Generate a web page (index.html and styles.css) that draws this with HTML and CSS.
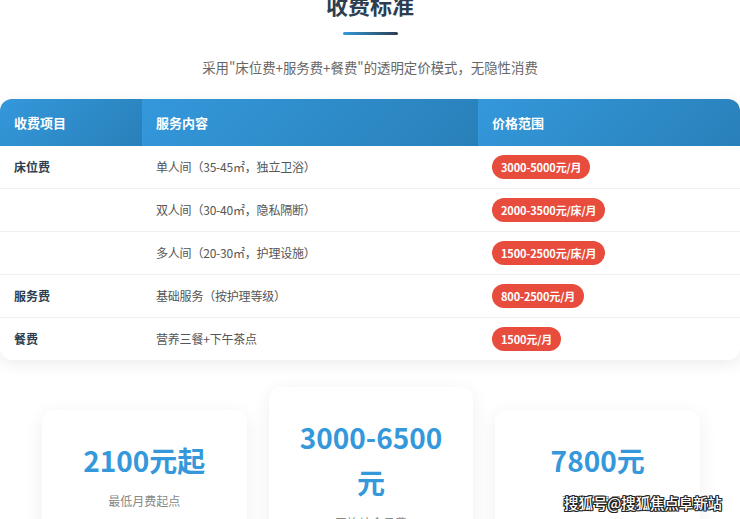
FILE: index.html
```html
<!DOCTYPE html>
<html lang="zh-CN">
<head>
<meta charset="utf-8">
<title>收费标准</title>
<link rel="stylesheet" href="styles.css">
</head>
<body>
<div class="page">
  <header class="head">
    <h2 class="title">收费标准</h2>
    <div class="bar"></div>
    <p class="subtitle">采用"床位费+服务费+餐费"的透明定价模式，无隐性消费</p>
  </header>

  <div class="table-card">
    <table class="fee-table">
      <colgroup>
        <col class="c1"><col class="c2"><col class="c3">
      </colgroup>
      <thead>
        <tr><th>收费项目</th><th>服务内容</th><th>价格范围</th></tr>
      </thead>
      <tbody>
        <tr><td class="item">床位费</td><td class="desc">单人间（35-45㎡，独立卫浴）</td><td><span class="pill">3000-5000元/月</span></td></tr>
        <tr><td class="item"></td><td class="desc">双人间（30-40㎡，隐私隔断）</td><td><span class="pill">2000-3500元/床/月</span></td></tr>
        <tr><td class="item"></td><td class="desc">多人间（20-30㎡，护理设施）</td><td><span class="pill">1500-2500元/床/月</span></td></tr>
        <tr><td class="item">服务费</td><td class="desc">基础服务（按护理等级）</td><td><span class="pill">800-2500元/月</span></td></tr>
        <tr><td class="item">餐费</td><td class="desc">营养三餐+下午茶点</td><td><span class="pill">1500元/月</span></td></tr>
      </tbody>
    </table>
  </div>

  <div class="cards">
    <div class="card"><div class="num">2100元起</div><div class="label">最低月费起点</div></div>
    <div class="card"><div class="num">3000-6500元</div><div class="label">平均综合月费</div></div>
    <div class="card"><div class="num">7800元</div><div class="label">高端护理月费</div></div>
  </div>

  <div class="watermark">搜狐号@搜狐焦点阜新站</div>
</div>
</body>
</html>
```

FILE: styles.css
```css
* { box-sizing: border-box; }
html, body { margin: 0; padding: 0; background: #fff; }
body { font-family: "Noto Sans CJK SC", "Noto Sans", sans-serif; }

.page {
  position: relative;
  width: 740px;
  height: 519px;
  overflow: hidden;
}

.head { text-align: center; margin-top: -11px; }
.title {
  margin: 0;
  font-size: 22px;
  line-height: 30px;
  font-weight: 700;
  color: #2c3e50;
}
.bar {
  width: 55px;
  height: 3px;
  margin: 13px auto 0;
  border-radius: 2px;
  background: linear-gradient(90deg, #3498db, #2c3e50);
}
.subtitle {
  margin: 21px 0 0;
  font-size: 13.4px;
  line-height: 22px;
  color: #666;
}

.table-card {
  margin-top: 21px;
  border-radius: 12px;
  overflow: hidden;
  background: #fff;
  box-shadow: 0 4px 15px rgba(0, 0, 0, 0.08);
}
.fee-table {
  width: 100%;
  border-collapse: collapse;
  table-layout: fixed;
}
.c1 { width: 142px; }
.c2 { width: 336px; }
.c3 { width: 262px; }

.fee-table th {
  text-align: left;
  padding: 15px 14px;
  font-size: 13px;
  line-height: 17px;
  font-weight: 700;
  color: #fff;
  background: linear-gradient(135deg, #3498db, #2980b9);
}
.fee-table td {
  padding: 9px 14px;
  font-size: 12px;
  line-height: 24px;
  border-bottom: 1px solid #f0f0f0;
  vertical-align: middle;
}
.fee-table tbody tr:last-child td { border-bottom: none; }
.item { color: #2c3e50; font-weight: 700; }
.desc { color: #555; letter-spacing: -0.2px; }
.pill {
  display: inline-block;
  height: 24px;
  padding: 0 9px;
  border-radius: 12px;
  background: #e74c3c;
  color: #fff;
  font-size: 11px;
  font-weight: 700;
  line-height: 24px;
  letter-spacing: -0.15px;
}

.cards {
  display: grid;
  grid-template-columns: repeat(3, 1fr);
  gap: 22px;
  align-items: center;
  margin-top: 27px;
  padding: 0 40px 0 42px;
}
.card {
  background: #fff;
  border-radius: 12px;
  padding: 28px 20px;
  text-align: center;
  box-shadow: 0 5px 20px rgba(0, 0, 0, 0.07);
}
.num {
  font-size: 28px;
  line-height: 45px;
  font-weight: 700;
  color: #3498db;
}
.label {
  margin-top: 8px;
  font-size: 12px;
  line-height: 19px;
  color: #888;
}

.watermark {
  position: absolute;
  right: 18px;
  bottom: 6px;
  font-size: 14.4px;
  line-height: 20px;
  font-weight: 500;
  color: #fff;
  text-shadow: 1px 0 0 #222, -1px 0 0 #222, 0 1px 0 #222, 0 -1px 0 #222,
    1px 1px 0 #222, -1px -1px 0 #222, 1px -1px 0 #222, -1px 1px 0 #222;
}
```
